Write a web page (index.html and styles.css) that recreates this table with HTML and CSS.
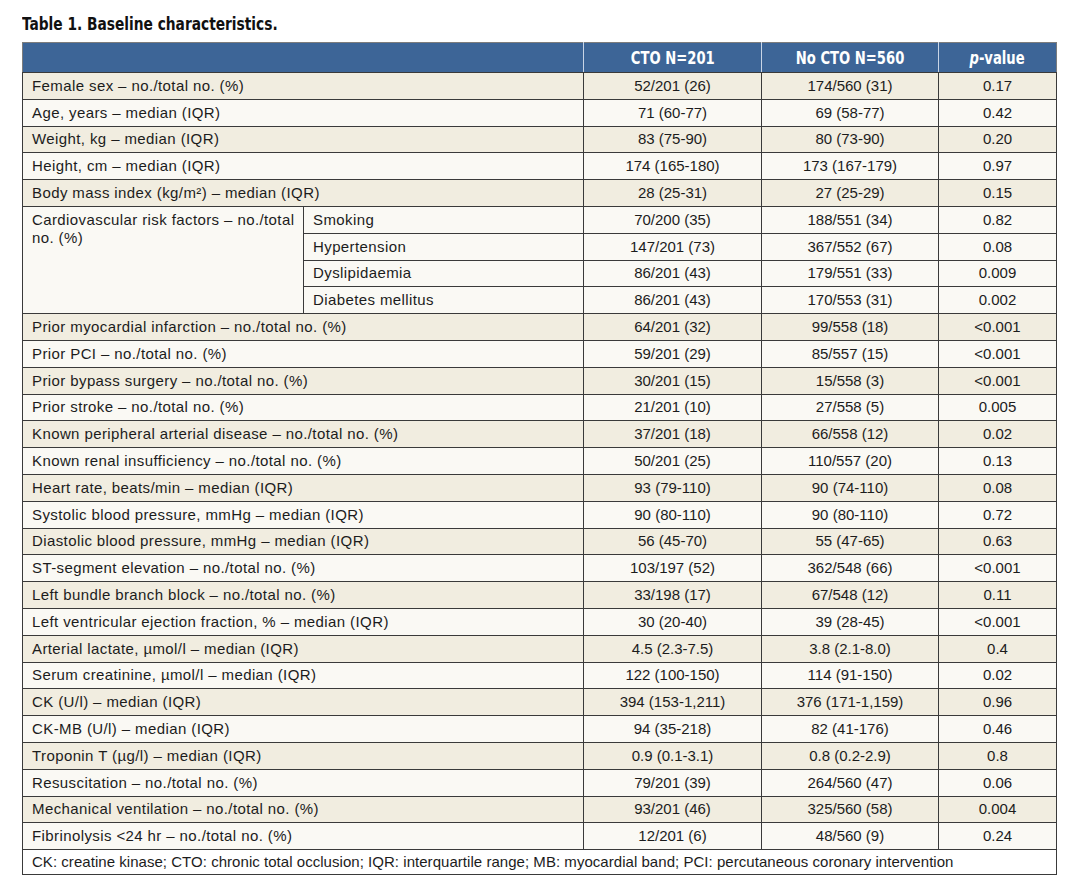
FILE: index.html
```html
<!DOCTYPE html>
<html lang="en">
<head>
<meta charset="utf-8">
<title>Table 1. Baseline characteristics.</title>
<link rel="stylesheet" href="styles.css">
</head>
<body>
<div class="page">
  <h1 class="title"><span class="narrow">Table 1. Baseline characteristics.</span></h1>
  <table class="tbl">
    <colgroup>
      <col class="c-a"><col class="c-b"><col class="c-c"><col class="c-d"><col class="c-e">
    </colgroup>
    <thead>
      <tr class="head">
        <th colspan="2"></th>
        <th><span class="narrow-h">CTO N=201</span></th>
        <th><span class="narrow-h">No CTO N=560</span></th>
        <th><span class="narrow-h"><i>p</i>-value</span></th>
      </tr>
    </thead>
    <tbody>
      <tr class="odd"><td colspan="2" class="lab">Female sex – no./total no. (%)</td><td>52/201 (26)</td><td>174/560 (31)</td><td>0.17</td></tr>
      <tr class="even"><td colspan="2" class="lab">Age, years – median (IQR)</td><td>71 (60-77)</td><td>69 (58-77)</td><td>0.42</td></tr>
      <tr class="odd"><td colspan="2" class="lab">Weight, kg – median (IQR)</td><td>83 (75-90)</td><td>80 (73-90)</td><td>0.20</td></tr>
      <tr class="even"><td colspan="2" class="lab">Height, cm – median (IQR)</td><td>174 (165-180)</td><td>173 (167-179)</td><td>0.97</td></tr>
      <tr class="odd"><td colspan="2" class="lab">Body mass index (kg/m²) – median (IQR)</td><td>28 (25-31)</td><td>27 (25-29)</td><td>0.15</td></tr>
      <tr class="even"><td rowspan="4" class="lab top">Cardiovascular risk factors – no./total no. (%)</td><td class="lab">Smoking</td><td>70/200 (35)</td><td>188/551 (34)</td><td>0.82</td></tr>
      <tr class="even"><td class="lab">Hypertension</td><td>147/201 (73)</td><td>367/552 (67)</td><td>0.08</td></tr>
      <tr class="even"><td class="lab">Dyslipidaemia</td><td>86/201 (43)</td><td>179/551 (33)</td><td>0.009</td></tr>
      <tr class="even"><td class="lab">Diabetes mellitus</td><td>86/201 (43)</td><td>170/553 (31)</td><td>0.002</td></tr>
      <tr class="odd"><td colspan="2" class="lab">Prior myocardial infarction – no./total no. (%)</td><td>64/201 (32)</td><td>99/558 (18)</td><td>&lt;0.001</td></tr>
      <tr class="even"><td colspan="2" class="lab">Prior PCI – no./total no. (%)</td><td>59/201 (29)</td><td>85/557 (15)</td><td>&lt;0.001</td></tr>
      <tr class="odd"><td colspan="2" class="lab">Prior bypass surgery – no./total no. (%)</td><td>30/201 (15)</td><td>15/558 (3)</td><td>&lt;0.001</td></tr>
      <tr class="even"><td colspan="2" class="lab">Prior stroke – no./total no. (%)</td><td>21/201 (10)</td><td>27/558 (5)</td><td>0.005</td></tr>
      <tr class="odd"><td colspan="2" class="lab">Known peripheral arterial disease – no./total no. (%)</td><td>37/201 (18)</td><td>66/558 (12)</td><td>0.02</td></tr>
      <tr class="even"><td colspan="2" class="lab">Known renal insufficiency – no./total no. (%)</td><td>50/201 (25)</td><td>110/557 (20)</td><td>0.13</td></tr>
      <tr class="odd"><td colspan="2" class="lab">Heart rate, beats/min – median (IQR)</td><td>93 (79-110)</td><td>90 (74-110)</td><td>0.08</td></tr>
      <tr class="even"><td colspan="2" class="lab">Systolic blood pressure, mmHg – median (IQR)</td><td>90 (80-110)</td><td>90 (80-110)</td><td>0.72</td></tr>
      <tr class="odd"><td colspan="2" class="lab">Diastolic blood pressure, mmHg – median (IQR)</td><td>56 (45-70)</td><td>55 (47-65)</td><td>0.63</td></tr>
      <tr class="even"><td colspan="2" class="lab">ST-segment elevation – no./total no. (%)</td><td>103/197 (52)</td><td>362/548 (66)</td><td>&lt;0.001</td></tr>
      <tr class="odd"><td colspan="2" class="lab">Left bundle branch block – no./total no. (%)</td><td>33/198 (17)</td><td>67/548 (12)</td><td>0.11</td></tr>
      <tr class="even"><td colspan="2" class="lab">Left ventricular ejection fraction, % – median (IQR)</td><td>30 (20-40)</td><td>39 (28-45)</td><td>&lt;0.001</td></tr>
      <tr class="odd"><td colspan="2" class="lab">Arterial lactate, µmol/l – median (IQR)</td><td>4.5 (2.3-7.5)</td><td>3.8 (2.1-8.0)</td><td>0.4</td></tr>
      <tr class="even"><td colspan="2" class="lab">Serum creatinine, µmol/l – median (IQR)</td><td>122 (100-150)</td><td>114 (91-150)</td><td>0.02</td></tr>
      <tr class="odd"><td colspan="2" class="lab">CK (U/l) – median (IQR)</td><td>394 (153-1,211)</td><td>376 (171-1,159)</td><td>0.96</td></tr>
      <tr class="even"><td colspan="2" class="lab">CK-MB (U/l) – median (IQR)</td><td>94 (35-218)</td><td>82 (41-176)</td><td>0.46</td></tr>
      <tr class="odd"><td colspan="2" class="lab">Troponin T (µg/l) – median (IQR)</td><td>0.9 (0.1-3.1)</td><td>0.8 (0.2-2.9)</td><td>0.8</td></tr>
      <tr class="even"><td colspan="2" class="lab">Resuscitation – no./total no. (%)</td><td>79/201 (39)</td><td>264/560 (47)</td><td>0.06</td></tr>
      <tr class="odd"><td colspan="2" class="lab">Mechanical ventilation – no./total no. (%)</td><td>93/201 (46)</td><td>325/560 (58)</td><td>0.004</td></tr>
      <tr class="even"><td colspan="2" class="lab">Fibrinolysis &lt;24 hr – no./total no. (%)</td><td>12/201 (6)</td><td>48/560 (9)</td><td>0.24</td></tr>
    </tbody>
    <tfoot>
      <tr class="foot"><td colspan="5" class="lab">CK: creatine kinase; CTO: chronic total occlusion; IQR: interquartile range; MB: myocardial band; PCI: percutaneous coronary intervention</td></tr>
    </tfoot>
  </table>
</div>
</body>
</html>
```

FILE: styles.css
```css
html, body {
  margin: 0;
  padding: 0;
  background: #ffffff;
}

.page {
  padding: 14px 0 0 22px;
  font-family: "Liberation Sans", Arial, sans-serif;
  color: #1c1c1c;
}

.title {
  margin: 0 0 8px 0;
  font-family: "DejaVu Sans Condensed", "DejaVu Sans", sans-serif;
  font-stretch: condensed;
  font-weight: bold;
  font-size: 17px;
  line-height: 20px;
  color: #111;
  white-space: nowrap;
}

.narrow {
  display: inline-block;
  transform: scaleX(0.9);
  transform-origin: left center;
}

.tbl {
  width: 1034px;
  border-collapse: collapse;
  table-layout: fixed;
  border: 1px solid #7d7d7d;
  font-size: 15px;
}

.c-a { width: 281px; }
.c-b { width: 280px; }
.c-c { width: 178px; }
.c-d { width: 177px; }
.c-e { width: 118px; }

.head th {
  height: 29px;
  padding: 0;
  background: #3d6597;
  color: #ffffff;
  font-family: "DejaVu Sans Condensed", "DejaVu Sans", sans-serif;
  font-stretch: condensed;
  font-weight: bold;
  font-size: 17px;
  text-align: center;
  white-space: nowrap;
  border-left: 1px solid #c9d5e6;
  border-bottom: 1px solid #3a3a3a;
}

.head th:first-child {
  border-left: none;
}

.narrow-h {
  display: inline-block;
  transform: scaleX(0.86);
  transform-origin: center center;
}

.tbl td {
  height: 25.8px;
  padding: 0;
  text-align: center;
  border: 1px solid #3a3a3a;
  white-space: nowrap;
  line-height: 18px;
}

.tbl td.lab {
  text-align: left;
  padding-left: 9px;
  letter-spacing: 0.4px;
}

.tbl td.top {
  vertical-align: top;
  white-space: normal;
  padding-top: 4px;
  padding-right: 6px;
}

.odd td { background: #f1ede0; }
.even td { background: #faf9f4; }

.foot td {
  background: #ffffff;
  height: 24px;
  border-top: 1px solid #7d7d7d;
}

.tbl .foot td.lab {
  letter-spacing: 0.04px;
}
```
